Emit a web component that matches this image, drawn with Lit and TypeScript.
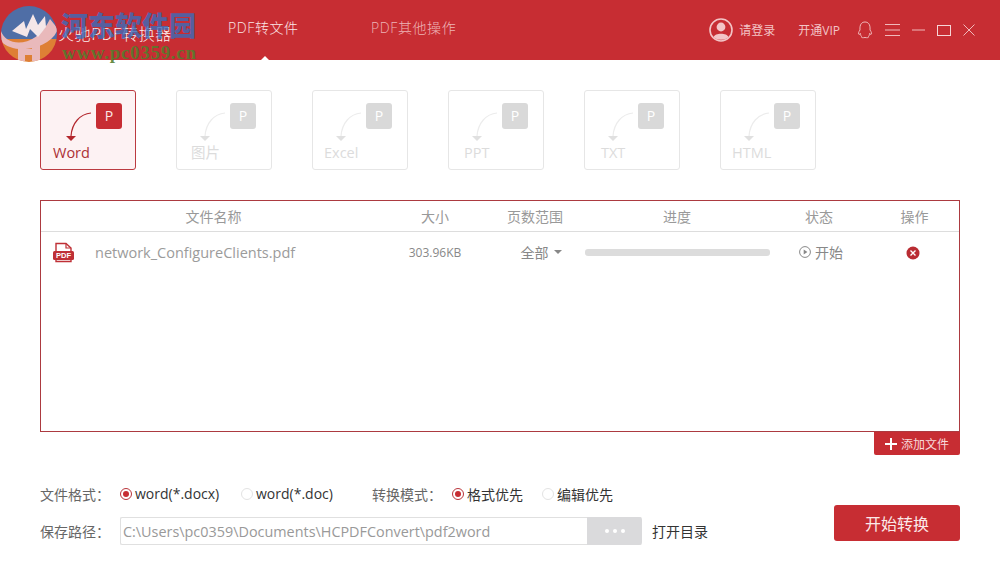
import { LitElement, html, css } from "lit";
import { customElement } from "lit/decorators.js";

const tabs = [
  { t: "Word", pad: 12 },
  { t: "图片", pad: 14 },
  { t: "Excel", pad: 11 },
  { t: "PPT", pad: 15 },
  { t: "TXT", pad: 16 },
  { t: "HTML", pad: 11 },
];

const tabIcon = (on: boolean) => html`<svg class="arrow" width="44" height="44" viewBox="0 0 44 44" fill="none">
  <path d="M38 10 C 27 11, 19 20, 18 33" stroke=${on ? "#b3272d" : "#ececec"} stroke-width="1.2"/>
  <path d="M13 33 H23 L18 38 Z" fill=${on ? "#b3272d" : "#e0e0e0"}/>
</svg>`;

@customElement("app-root")
export class AppRoot extends LitElement {
  static styles = css`
    :host { display: block; width: 1000px; height: 580px; background: #fff; position: relative; overflow: hidden;
      font-family: "Open Sans", "Noto Sans CJK SC", sans-serif; color: #555; }
    * { box-sizing: border-box; }
    .top { height: 60px; background: #c72d33; display: flex; align-items: center; color: #fff; padding-right: 25px; }
    .title { margin-left: 58px; width: 170px; font-size: 16px; letter-spacing: 0.6px; padding-top: 5px; color: #fbeeee; font-family: "Noto Sans CJK SC", sans-serif; font-weight: 300; white-space: nowrap; }
    .nav { font-size: 14px; letter-spacing: 0.6px; padding-bottom: 7px; position: relative; height: 60px; display: flex; align-items: center; }
    .nav.a { width: 143px; color: #fbe6e6; font-weight: 300; }
    .nav.a::after { content: ""; position: absolute; left: 33px; bottom: 0; border: 4px solid transparent; border-bottom-color: #fff; border-top-width: 0; }
    .nav.b { color: #eeb4b6; font-weight: 300; }
    .spacer { flex: 1; }
    .user { display: flex; align-items: center; gap: 6px; font-size: 12px; color: #f3c4c6; }
    .vip { margin-left: 23px; margin-right: 17px; font-size: 12px; color: #f3c4c6; }
    .ctl { display: flex; align-items: center; gap: 12px; }
    .ctl svg { display: block; }

    .mark { position: absolute; left: 0; top: 0; width: 210px; height: 62px; pointer-events: none; }
    .mark svg { position: absolute; left: 0; top: 5px; }
    .mark b { position: absolute; white-space: nowrap; }
    .mark .cn { left: 61px; top: 10px; font-size: 27px; line-height: 30px; color: rgba(55,110,190,.8); font-family: "Noto Sans CJK SC", serif; font-weight: 900; }
    .mark .url { left: 62px; top: 43px; font-size: 19px; line-height: 20px; color: rgba(85,125,45,.9); letter-spacing: 0.7px; font-family: "Liberation Serif", serif; }

    .tabs { display: flex; gap: 40px; padding: 30px 40px 0; }
    .tab { width: 96px; height: 80px; border: 1px solid #e6e6e6; border-radius: 3px; position: relative; padding-top: 52px; font-size: 14.5px; line-height: 20px; color: #dcdcdc; }
    .tab.on { border-color: #bb3a40; background: #fdf2f3; color: #ac3036; }
    .arrow { position: absolute; left: 10px; top: 12px; }
    .on .arrow { left: 12px; }
    .p { position: absolute; left: 53px; top: 12px; width: 26px; height: 26px; border-radius: 3px; background: #d9d9d9; color: #fff; font-size: 14px; display: flex; align-items: center; justify-content: center; }
    .on .p { left: 55px; background: #c72d33; color: #fbe6e6; }

    .box { margin: 30px 40px 0; height: 232px; border: 1px solid #ac3a40; font-size: 14px; }
    .row { display: grid; grid-template-columns: 345px 98px 102px 182px 102px 1fr; align-items: center; }
    .head { height: 31px; border-bottom: 1px solid #dddddd; color: #999; text-align: center; }
    .file { height: 41px; color: #999; }
    .name { display: flex; align-items: center; gap: 21px; padding-left: 12px; font-size: 14.5px; color: #9b9b9b; }
    .size { text-align: center; font-size: 12px; color: #888; }
    .pages { display: flex; justify-content: center; align-items: center; gap: 5px; color: #888; margin-left: 12px; padding-bottom: 1px; }
    .caret { border: 4px solid transparent; border-top-color: #888; border-bottom-width: 0; }
    .track { width: 185px; height: 7px; background: #dcdcdc; border-radius: 3px; margin-left: -1px; }
    .state { display: flex; justify-content: center; align-items: center; gap: 4px; color: #888; padding-left: 4px; padding-bottom: 1px; }
    .op { display: flex; justify-content: center; padding-right: 4px; }

    .addwrap { display: flex; justify-content: flex-end; padding-right: 40px; }
    .add { width: 86px; height: 23px; background: #c72d33; color: #f7d9da; font-size: 12px; display: flex; align-items: center; justify-content: center; gap: 4px; border-radius: 0 0 2px 2px; }

    .bottom { display: flex; justify-content: space-between; align-items: flex-end; padding: 26px 40px 0; }
    .form { display: flex; flex-direction: column; gap: 11px; flex: none; }
    .line { display: flex; align-items: center; height: 25px; font-size: 14px; color: #444; }
    .line.l2 { height: 28px; }
    .lb { width: 80px; flex: none; color: #666; font-size: 14px; }
    .opt { display: flex; align-items: center; gap: 3px; color: #333; flex: none; }
    .rd { width: 12px; height: 12px; border-radius: 50%; border: 1px solid #e3e3e3; background: #fff; display: flex; align-items: center; justify-content: center; flex: none; }
    .rd.on { border-color: #b9343a; }
    .rd.on::after { content: ""; width: 6px; height: 6px; border-radius: 50%; background: #c72d33; }
    .w1 { width: 121px; } .w2 { width: 131px; } .w3 { width: 90px; } .w4 { width: 71px; }
    .path { width: 522px; flex: none; height: 28px; border: 1px solid #e0e0e0; border-right: 0; border-radius: 2px; display: flex; align-items: stretch; color: #999; font-size: 14.4px; }
    .txt { flex: 1; padding-left: 2px; line-height: 27px; white-space: nowrap; overflow: hidden; }
    .more { width: 55px; background: #dadadc; border-radius: 0 3px 3px 0; margin: -1px 0; display: flex; align-items: center; justify-content: center; gap: 4px; }
    .more i { width: 4px; height: 4px; border-radius: 50%; background: #fff; }
    .open { margin-left: 10px; color: #333; font-size: 14px; flex: none; }
    .go { width: 126px; height: 36px; margin-bottom: 4px; background: #c72d33; color: #fbe9e9; border-radius: 3px; font-size: 16px; display: flex; align-items: center; justify-content: center; }
  `;

  render() {
    const header = ["文件名称", "大小", "页数范围", "进度", "状态", "操作"];
    return html`
      <div class="top">
        <div class="title">火驰PDF转换器</div>
        <div class="nav a">PDF转文件</div>
        <div class="nav b">PDF其他操作</div>
        <div class="spacer"></div>
        <div class="user">
          <svg width="24" height="24" viewBox="0 0 24 24" fill="none">
            <circle cx="12" cy="12" r="11" stroke="#f3c4c6" stroke-width="1.6"/>
            <circle cx="12" cy="9" r="4.4" fill="#f3c4c6"/>
            <path d="M4.5 19 C6 14.5 18 14.5 19.5 19 C17 22.6 7 22.6 4.5 19Z" fill="#f3c4c6"/>
          </svg>
          请登录
        </div>
        <div class="vip">开通VIP</div>
        <div class="ctl">
          <svg width="16" height="18" viewBox="0 0 16 18" fill="none" stroke="#f0b9bb" stroke-width="1">
            <path d="M3 9 C2.5 3, 5 1, 8 1 C11 1, 13.5 3, 13 9 C14.5 11, 15 13, 14 13.5 L12.5 12.5 C12.5 14, 12 15, 11.5 15.5 C12 16.5 11 17, 8 16.5 C5 17 4 16.5 4.5 15.5 C4 15, 3.5 14, 3.5 12.5 L2 13.5 C1 13, 1.5 11, 3 9Z"/>
          </svg>
          <svg width="15" height="12" viewBox="0 0 15 12" stroke="#f0b9bb" stroke-width="1"><path d="M0 .5H15M0 6H15M0 11.5H15"/></svg>
          <svg width="13" height="2" viewBox="0 0 13 2" stroke="#f0b9bb" stroke-width="1"><path d="M0 1H13"/></svg>
          <svg width="14" height="11" viewBox="0 0 14 11" fill="none" stroke="#f6d5d6" stroke-width="1"><rect x=".5" y=".5" width="13" height="10"/></svg>
          <svg width="12" height="12" viewBox="0 0 12 12" stroke="#f0b9bb" stroke-width="1"><path d="M.5 .5L11.5 11.5M11.5 .5L.5 11.5"/></svg>
        </div>
      </div>

      <div class="tabs">
        ${tabs.map((x, i) => html`<div class="tab ${i === 0 ? "on" : ""}" style="padding-left:${x.pad}px">
          ${tabIcon(i === 0)}<div class="p">P</div>${x.t}
        </div>`)}
      </div>

      <div class="box">
        <div class="row head">${header.map((h) => html`<div>${h}</div>`)}</div>
        <div class="row file">
          <div class="name">
            <svg width="21" height="21" viewBox="0 0 21 21" fill="none">
              <path d="M3 9V1.5H13L18 6V9" stroke="#bf3036" stroke-width="1.4"/>
              <path d="M13 1.5V6H18" stroke="#bf3036" stroke-width="1.2"/>
              <path d="M3 17.5V19.5H18V17.5" stroke="#bf3036" stroke-width="1.4"/>
              <rect x="0" y="9" width="21" height="9" rx="1.5" fill="#bf3036"/>
              <text x="10.5" y="16.3" text-anchor="middle" font-size="7.5" font-weight="700" fill="#fff" font-family="Liberation Sans">PDF</text>
            </svg>
            network_ConfigureClients.pdf
          </div>
          <div class="size">303.96KB</div>
          <div class="pages">全部<span class="caret"></span></div>
          <div><div class="track"></div></div>
          <div class="state">
            <svg width="12" height="12" viewBox="0 0 12 12" fill="none"><circle cx="6" cy="6" r="5.4" stroke="#888" stroke-width="1"/><path d="M4.7 3.4L8.4 6L4.7 8.6Z" fill="#888"/></svg>
            开始
          </div>
          <div class="op">
            <svg width="14" height="14" viewBox="0 0 14 14"><circle cx="7" cy="7" r="6.5" fill="#b92c32"/><path d="M4.5 4.5L9.5 9.5M9.5 4.5L4.5 9.5" stroke="#fff" stroke-width="1.4"/></svg>
          </div>
        </div>
      </div>
      <div class="addwrap">
        <div class="add">
          <svg width="12" height="12" viewBox="0 0 12 12" stroke="#fff" stroke-width="2"><path d="M0 6H12M6 0V12"/></svg>
          添加文件
        </div>
      </div>

      <div class="bottom">
        <div class="form">
          <div class="line">
            <span class="lb">文件格式：</span>
            <span class="opt w1"><span class="rd on"></span>word(*.docx)</span>
            <span class="opt w2"><span class="rd"></span>word(*.doc)</span>
            <span class="lb">转换模式：</span>
            <span class="opt w3"><span class="rd on"></span>格式优先</span>
            <span class="opt w4"><span class="rd"></span>编辑优先</span>
          </div>
          <div class="line l2">
            <span class="lb">保存路径：</span>
            <div class="path">
              <div class="txt">C:\\Users\\pc0359\\Documents\\HCPDFConvert\\pdf2word</div>
              <div class="more"><i></i><i></i><i></i></div>
            </div>
            <span class="open">打开目录</span>
          </div>
        </div>
        <div class="go">开始转换</div>
      </div>

      <div class="mark">
        <svg width="60" height="58" viewBox="0 0 60 58">
          <defs><clipPath id="c"><circle cx="29" cy="29" r="28"/></clipPath></defs>
          <g clip-path="url(#c)">
            <rect width="60" height="36" fill="#4f6ea6"/>
            <rect y="34" width="60" height="26" fill="#de7f35"/>
            <path d="M1 26 C6 42, 36 44, 50 14 L58 24 C50 46, 12 50, 1 36Z" fill="#e9b9bb"/>
            <path d="M12 26 L24 16 L26 24 L33 9 L38 20 L45 11 L46 22 L38 32 L30 24 L27 32 Z" fill="#f4e6e8"/>
            <path d="M18 38H25V44H32V38H40V56H32V50H25V56H18Z" fill="#e9b9bb"/>
          </g>
        </svg>
        <b class="cn">河东软件园</b>
        <b class="url">www.pc0359.cn</b>
      </div>
    `;
  }
}
